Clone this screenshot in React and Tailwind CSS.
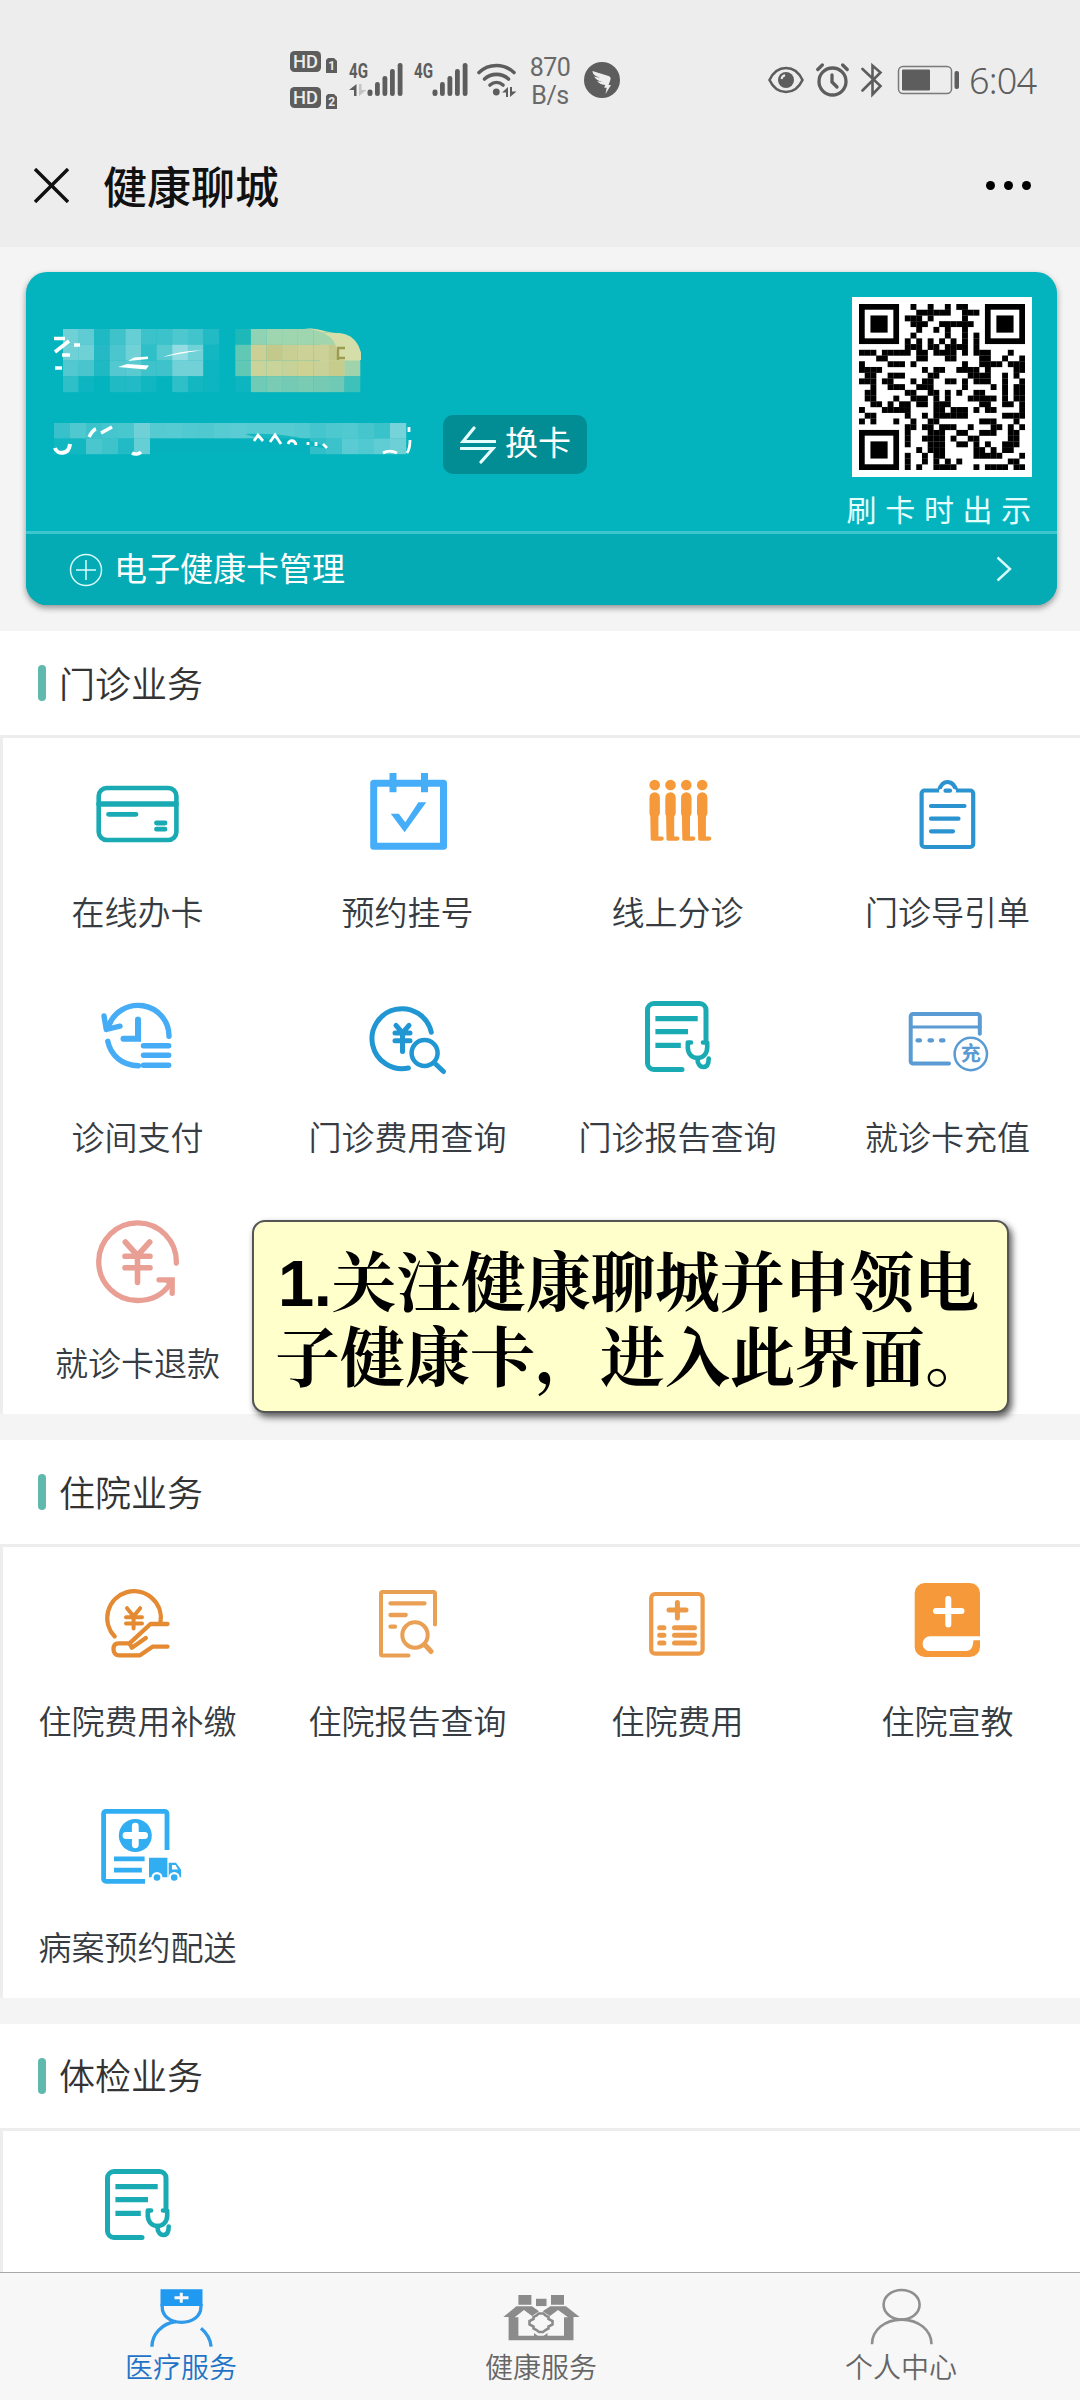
import React from 'react';

const TEAL = '#19aab3';
const ORANGE = '#f5993b';

/* ---------- Status bar ---------- */

const HdBadge = ({ sim }) => (
  <svg width="48" height="22" viewBox="0 0 48 22">
    <rect x="0" y="0" width="31" height="21" rx="4.5" fill="#5d5d5d" />
    <text x="3" y="16.8" fontFamily="Roboto" fontWeight="500" fontSize="18" textLength="25" lengthAdjust="spacingAndGlyphs" fill="#ededed">HD</text>
    <path d="M38 7h6l3 3v12H36V9z" fill="#5d5d5d" />
    <text x="41.6" y="19.4" textAnchor="middle" fontFamily="Roboto" fontWeight="700" fontSize="12" fill="#ededed">{sim}</text>
  </svg>
);

const Signal = ({ data = false }) => (
  <svg className="overflow-visible" width="54" height="34" viewBox="0 0 54 34">
    <text x="0" y="15" fontFamily="Roboto" fontWeight="700" fontSize="21" textLength="19" lengthAdjust="spacingAndGlyphs" fill="#5d5d5d">4G</text>
    {data && (
      <>
        <path d="M7.5 21v12H5v-6H0z" fill="#5d5d5d" />
        <path d="M10 33V21h2.500v6h5z" fill="#c4c4c4" />
      </>
    )}
    <g fill="#5d5d5d">
      <rect x="18.500" y="26.500" width="5" height="6.500" rx="2.300" />
      <rect x="26" y="19" width="4.800" height="14" rx="2.300" />
      <rect x="33.500" y="13" width="4.800" height="20" rx="2.300" />
      <rect x="41" y="6" width="4.800" height="27" rx="2.300" />
      <rect x="48.700" y="0" width="4.800" height="33" rx="2.300" />
    </g>
  </svg>
);

const Wifi = () => (
  <svg width="40" height="34" viewBox="0 0 40 34">
    <g fill="none" stroke="#5d5d5d" strokeWidth="3.6" strokeLinecap="round">
      <path d="M2 9.500C12 .2 27 .2 37 9.500" />
      <path d="M7.500 16C14.500 9.800 24.500 9.800 31.500 16" />
      <path d="M13 22c4-3.400 9-3.400 13 0" />
    </g>
    <circle cx="19.300" cy="29" r="3.400" fill="#5d5d5d" />
    <path d="M31 24v10h-2v-4.500h-4zM33 34V24h2v4.500h4.500z" fill="#5d5d5d" />
  </svg>
);

const StatusBar = () => (
  <div className="flex h-[127px] items-center pt-8 text-[#5d5d5d]">
    <div className="ml-[290px] flex flex-col gap-[14px]">
      <HdBadge sim="1" />
      <HdBadge sim="2" />
    </div>
    <div className="ml-[11px]"><Signal data /></div>
    <div className="ml-[11px]"><Signal /></div>
    <div className="ml-[9px]"><Wifi /></div>
    <div className="ml-[11px] w-[44px] pt-1 text-center font-[Roboto] text-[25px] leading-[28px] tracking-[-0.5px] text-[#696969]">
      <div>870</div>
      <div className="whitespace-nowrap">B/s</div>
    </div>
    <svg className="ml-[12px]" width="36" height="36" viewBox="0 0 36 36">
      <circle cx="18" cy="18" r="18" fill="#5d5d5d" />
      <path d="M8.500 9c5 2 11 3 16 5 2.500 1 2.500 2.500 1.700 4.500L24.500 23H27l-5.500 9 1.200-6.200h-2.500l1-2.800c-4-.5-6.500-1.500-8-4 2 .6 3.500.7 5 .6-4-.8-7-2.200-8-5.400 2 1 4 1.400 6 1.500C11 14 8.700 12.500 8.500 9z" fill="#ededed" />
    </svg>

    <svg className="ml-[148px]" width="36" height="28" viewBox="0 0 36 28">
      <path d="M1.500 14C9-2 27-2 34.500 14 27 30 9 30 1.500 14z" fill="none" stroke="#5d5d5d" strokeWidth="2.600" />
      <circle cx="18" cy="14" r="8" fill="#5d5d5d" />
      <path d="M13.500 13c.3-2 1.600-3.400 3.600-3.800" fill="none" stroke="#ededed" strokeWidth="2" />
    </svg>
    <svg className="ml-[12px]" width="33" height="34" viewBox="0 0 33 34">
      <g fill="none" stroke="#5d5d5d" strokeLinecap="round">
        <circle cx="16.500" cy="18.500" r="13.500" strokeWidth="3.300" />
        <path d="M16 12v7l5 5" strokeWidth="3.300" />
        <path d="M1.800 6.500l4.500-4.500M31.200 6.500L26.700 2" strokeWidth="3.300" />
      </g>
    </svg>
    <svg className="ml-[12px]" width="22" height="36" viewBox="0 0 22 36">
      <path d="M1.500 7l18 17-8 8.500v-29l8 7-18 18" fill="none" stroke="#5d5d5d" strokeWidth="2.600" strokeLinecap="round" />
    </svg>
    <svg className="ml-[14px]" width="63" height="30" viewBox="0 0 63 30">
      <rect x="1.500" y="1.500" width="53" height="27" rx="4.500" fill="none" stroke="#7a7a7a" strokeWidth="1.500" />
      <rect x="5" y="4.500" width="28" height="21" rx="1" fill="#5d5d5d" />
      <rect x="57.500" y="6" width="4.500" height="18" rx="2" fill="#5d5d5d" />
    </svg>
    <span className="ml-[9px] pt-[3px] font-[family-name:'Noto_Sans'] text-[36px] leading-none font-[350] tracking-[-0.8px]">6:04</span>
  </div>
);

const TitleBar = () => (
  <div className="flex h-[120px] items-center pl-[34px] pr-[49px]">
    <svg className="mb-[4px]" width="35" height="35" viewBox="0 0 35 35">
      <path d="M1 1l33 33M34 1L1 34" stroke="#111" strokeWidth="3.400" />
    </svg>
    <h1 className="mb-[5px] ml-[34px] text-[44px] leading-none font-medium text-[#111]">健康聊城</h1>
    <div className="ml-auto flex gap-[9px] pb-[4px]">
      <i className="h-[9px] w-[9px] rounded-full bg-black" />
      <i className="h-[9px] w-[9px] rounded-full bg-black" />
      <i className="h-[9px] w-[9px] rounded-full bg-black" />
    </div>
  </div>
);

/* ---------- Health card ---------- */

// Dark modules per row (finder patterns are drawn separately)
const QR_ROWS = [
  [9, 12, 15, 17, 18],
  [10, 11, 12, 13, 14, 15, 18, 19, 20],
  [8, 9, 10, 12, 18],
  [9, 10, 11, 14, 15, 16, 17, 18, 19],
  [10, 13, 15, 18],
  [9, 15, 18, 20],
  [8, 10, 12, 14, 16, 18, 20],
  [8, 9, 10, 12, 13, 15, 16, 17, 18, 20],
  [0, 1, 2, 4, 5, 6, 7, 8, 10, 11, 13, 14, 15, 16, 18, 20, 21, 22, 26],
  [3, 4, 10, 11, 15, 16, 21, 22, 25, 28],
  [0, 5, 6, 7, 9, 18, 21, 22, 23, 24, 26, 27, 28],
  [0, 1, 2, 3, 11, 13, 14, 17, 18, 19, 20, 22, 27, 28],
  [1, 2, 5, 6, 7, 12, 13, 19, 20, 21, 22, 25, 27],
  [0, 1, 2, 4, 5, 9, 11, 12, 15, 16, 18, 20, 21, 22, 25, 28],
  [2, 5, 6, 7, 10, 11, 12, 18, 23, 25, 27, 28],
  [1, 2, 8, 9, 12, 13, 15, 17, 20, 21, 25, 27, 28],
  [1, 2, 6, 9, 10, 11, 13, 15, 19, 20, 21, 22, 23, 25, 27, 28],
  [2, 3, 5, 7, 8, 10, 11, 13, 14, 15, 21, 22, 25, 26, 28],
  [4, 5, 6, 7, 8, 13, 14, 16, 17, 18, 20, 22, 23, 28, 0],
  [1, 2, 8, 11, 13, 14, 15, 16, 17, 18, 25, 26, 27, 28],
  [0, 2, 6, 9, 12, 13, 21, 22, 23, 27],
  [8, 9, 11, 12, 14, 15, 16, 19, 23, 24, 26, 28],
  [8, 12, 13, 14, 17, 18, 21, 22, 23, 26, 27],
  [8, 11, 12, 13, 14, 16, 19, 20, 26, 27],
  [8, 12, 13, 14, 17, 18, 20, 22, 25, 26, 27],
  [10, 12, 13, 14, 20, 21, 23, 25, 26],
  [8, 11, 13, 14, 20, 21, 22, 23, 24, 28],
  [8, 11, 13, 15, 17, 26, 27],
  [8, 10, 13, 14, 15, 16, 20, 22, 23, 24, 25, 27, 28],
];

const Finder = ({ x, y }) => (
  <g transform={`translate(${x} ${y})`}>
    <rect width="7" height="7" fill="#000" />
    <rect x="1" y="1" width="5" height="5" fill="#fff" />
    <rect x="2" y="2" width="3" height="3" fill="#000" />
  </g>
);

const QrCode = () => (
  <div className="h-[180px] w-[180px] bg-white p-[7px]">
    <svg width="166" height="166" viewBox="0 0 29 29">
      {QR_ROWS.map((cols, y) =>
        cols.map((x) => <rect key={`${x}-${y}`} x={x} y={y} width="1.03" height="1.03" fill="#000" />)
      )}
      <Finder x={0} y={0} />
      <Finder x={22} y={0} />
      <Finder x={0} y={22} />
    </svg>
  </div>
);

// Mosaic over the holder's name, one colour per cell
const NAME_CELLS = [
  ['#6fd0d6', '#5fcbd2', '#1fb9c3', '#3fc2ca', '#66ced5', '#3cc2ca', '#3cc2ca', '#4ec8cf', '#42c4cc', '#22bac4'],
  ['#6fd0d6', '#6fd0d6', '#25b9c5', '#4bc6ce', '#70d1d7', '#2fbfc8', '#5acad1', '#93dde2', '#70d1d7', '#12b7c1'],
  ['#54c8d0', '#4ac5cd', '#1fb9c3', '#54c8d0', '#5acad1', '#3fc2ca', '#3fc2ca', '#72d1d7', '#72d1d7', '#0cb5bf'],
  ['#2fbfc8', '#0cb5bf', '#03b4bf', '#1fbac4', '#22bbc5', '#10b7c1', '#03b4bf', '#2fbfc8', '#12b7c1', '#0cb5bf'],
];

const BADGE_CELLS = [
  ['#1fb8b9', '#8fd2b4', '#9fd6b0', '#9fd6b0', '#9fd6b0', '#a0d5ae', '#a3d6ac'],
  ['#62c8b6', '#cdd095', '#c2c98b', '#c9cf93', '#cbd197', '#cbd197', '#c3ca8b'],
  ['#62c8b6', '#c9d39a', '#c9d39a', '#c7d298', '#cdd294', '#c9d198', '#c5cc8c', '#a0d3ac'],
  ['#0cb5bf', '#6fcab6', '#79cbb3', '#75cab4', '#79cbb3', '#76cab4', '#6fc9b4', '#3ec0bb'],
];

const NUMBER_CELLS = [
  ['#38c1ca', '#50c8d0', '#3cc2cb', '#45c5cd', '#49c7cf', '#6fd1d7', '#55cad1', '#57cbd2', '#50c9d0', '#4fc8d0', '#57cbd2', '#5bccd3', '#57cbd2', '#57cbd2', '#57cbd2', '#50c9d0', '#45c5cd', '#4ec8cf', '#50c9d0', '#47c5cd', '#3ac2ca', '#76d3d9'],
  ['#10b7c1', '#12b7c1', '#4ac6ce', '#3fc3cb', '#22bbc5', '#66ced5', '#05b1bc', '#05b1bc', '#05b1bc', '#05b1bc', '#05b1bc', '#05b1bc', '#05b1bc', '#05b1bc', '#05b1bc', '#05b1bc', '#30bfc8', '#3cc2cb', '#5acbd2', '#50c9d0', '#60cdd4', '#6cd0d6'],
];

const MaskedName = () => (
  <svg className="ml-[26px]" width="330" height="70" viewBox="0 0 330 70">
    {NAME_CELLS.map((row, y) =>
      row.map((c, x) => (
        <rect key={`${x}-${y}`} x={11 + x * 15.6} y={4 + y * 15.75} width="15.8" height="15.9" fill={c} />
      ))
    )}
    <path d="M2 13.500h11M17 16L3 27M10 30h8M22 20l6 0M3 43h7" stroke="#fff" strokeWidth="3.600" fill="none" />
    <path d="M82 32.500l14-1v2.500l-20 2zM66 42l9-3 22 1.500-3 4zM111 32c14-5 26-6 41-7-14 2-26 4-41 7z" fill="#fff" />
    <path d="M268 8h14a26 26 0 0 1 26 26v17h-40z" fill="#d5dda8" />
    {BADGE_CELLS.map((row, y) =>
      row.map((c, x) => (
        <rect key={`${x}-${y}`} x={183.3 + x * 15.6} y={4 + y * 15.75} width="15.8" height="15.9" fill={c} />
      ))
    )}
    <path d="M252 3c22 3 33 10 33 26v6h24v-9C308 15 298 8 287 8h-17L280 3z" fill="#d5dda8" />
    <path d="M252 3h58v29C307 15 298 8 284 8c-10-1-18-5-32-5z" fill="#03b4bf" />
    <path d="M293 23h-7v12M286 33h7" stroke="#9c9b50" strokeWidth="2.400" fill="none" />
  </svg>
);

const MaskedNumber = () => (
  <svg className="ml-[26px]" width="391" height="59" viewBox="0 0 391 59">
    {NUMBER_CELLS.map((row, y) =>
      row.map((c, x) => (
        <rect key={`${x}-${y}`} x={2 + x * 16} y={8 + y * 15.5} width="16.200" height="15.700" fill={c} />
      ))
    )}
    <path d="M3 33c2 7 14 7 15-4" stroke="#fff" strokeWidth="4" fill="none" />
    <path d="M37 22c2-4 4-7 7-8M49 18l11-6M80 38c3 2 7 1 9-1" stroke="#fff" strokeWidth="3.500" fill="none" />
    <path d="M193 19c35-1 64 3 84 15-25-5-55-5-84-15z" fill="#05b1bc" opacity=".8" />
    <path d="M202 26l4-6 5 6M218 27l5-7 6 9M236 29c2-5 7-4 8 1M256 27v3M264 27v4M271 29l4 4M331 38c5-3 10-2 14 0M357 12v5M355 38c3-4 3-8 3-13" stroke="#fff" strokeWidth="2.800" fill="none" />
  </svg>
);

const HealthCard = () => (
  <section className="mt-[25px] ml-[26px] h-[333px] w-[1031px] overflow-hidden rounded-[21px] bg-[#03b4bf] text-white shadow-[0_3px_6px_rgba(0,0,0,0.4)]">
    <div className="flex h-[259px] justify-between">
      <div className="pt-[53px]">
        <MaskedName />
        <div className="mt-[20px] flex items-center">
          <MaskedNumber />
          <button className="flex h-[59px] w-[144px] items-center rounded-[10px] bg-[#028d95] pl-[17px]">
            <svg width="36" height="38" viewBox="0 0 36 38">
              <path d="M14 2L3 15.500h32M1 22.500h32L21 36" fill="none" stroke="#e5fdfd" strokeWidth="3.200" strokeLinecap="round" />
            </svg>
            <span className="mb-[6px] ml-[9px] text-[33px] leading-none">换卡</span>
          </button>
        </div>
      </div>
      <div className="mr-[16px] flex flex-col items-end pt-[25px]">
        <div className="mr-[9px]"><QrCode /></div>
        <p className="mt-[15px] mr-[1px] text-[30px] leading-[32px] tracking-[8.7px] text-[#e5ffff]">刷卡时出示</p>
      </div>
    </div>
    <div className="flex h-[74px] items-center border-t-[3px] border-[#3ec6ce] bg-[#04abb5] pl-[43px] pr-[45px]">
      <svg width="34" height="34" viewBox="0 0 34 34">
        <circle cx="17" cy="17" r="15.500" fill="none" stroke="#d9fbfb" strokeWidth="1.500" />
        <path d="M7 17h20M17 7v20" stroke="#d9fbfb" strokeWidth="1.500" />
      </svg>
      <span className="mb-[4px] ml-[11px] text-[33px] leading-none">电子健康卡管理</span>
      <svg className="mb-[2px] ml-auto" width="16" height="26" viewBox="0 0 16 26">
        <path d="M1.500 1.500L14 13 1.500 24.500" fill="none" stroke="#d9fbfb" strokeWidth="2.400" />
      </svg>
    </div>
  </section>
);

/* ---------- Service icons (110 x 110 artboard) ---------- */

const Icon = ({ children, color, width = 5 }) => (
  <svg width="110" height="110" viewBox="0 0 110 110" fill="none" stroke={color} strokeWidth={width} strokeLinecap="round" strokeLinejoin="round">
    {children}
  </svg>
);

const CardIcon = () => (
  <Icon color={TEAL} width={4.6}>
    <rect x="15.700" y="30" width="77.700" height="52" rx="8" />
    <path d="M16 46h77" strokeWidth="5.500" />
    <path d="M25.500 56.300H53M73.500 65H82M73.500 71.200H82" strokeWidth="4.800" />
  </Icon>
);

const CalendarIcon = () => (
  <Icon color="#46adf9" width={7}>
    <rect x="20.700" y="25.200" width="69.800" height="63" />
    <path d="M40 15v19.300M71.500 15v19.300" strokeLinecap="butt" />
    <path d="M37.800 55.700h8l6.500 8.600 13.100-20h7.900L51.600 74.300z" fill="#46adf9" stroke="none" />
  </Icon>
);

const PeopleIcon = () => (
  <Icon color={ORANGE}>
    {[31.7, 47.5, 63.3, 79.2].map((x) => (
      <g key={x} transform={`translate(${x} 0)`} fill={ORANGE} stroke="none">
        <circle cx="0" cy="27" r="5.300" />
        <path d="M-5.200 39.500a5.200 5.200 0 0 1 10.400 0V55c0 1.500-1.200 2.500-1.500 4v19.500H7a1.800 1.800 0 0 1 0 4.200h-9c-1.500 0-2-.7-2-2L-4.400 58c-.6-1-.8-2-.8-3z" />
      </g>
    ))}
  </Icon>
);

const ClipboardIcon = () => (
  <Icon color="#2b93d0" width={4.2}>
    <path d="M46 32.500H31.600a3 3 0 0 0-3 3V86a3 3 0 0 0 3 3h45.600a3 3 0 0 0 3-3V35.500a3 3 0 0 0-3-3H63.500c-2-5-4-8.500-9-8.500s-7 3.500-8.500 8.500z" />
    <path d="M48 33h13" stroke="#fff" />
    <path d="M52.500 32.700h4.500M38 48h33.500M38 60.700h27.500M38 73.300h22" />
  </Icon>
);

const ClockPayIcon = () => (
  <Icon color="#45acf5" width={5.4}>
    <path d="M25.500 43.500A31 30.500 0 0 1 86 53.300" />
    <path d="M21 33l2.300 13.500 13.700-3.300" />
    <path d="M24.800 58.300C27.500 72 39 82.500 55.400 82.700" />
    <path d="M55 36.500v19.200H40.500" strokeWidth="6" strokeLinejoin="miter" />
    <path d="M60.500 62.700h25.200M60.500 72.300h25.200M60.500 82.300h25.200" />
  </Icon>
);

const YenSearchIcon = () => (
  <Icon color="#2096d2">
    <path d="M78.300 49.300A30 30 0 1 0 55.400 85" />
    <path d="M43 42.300l6.500 7.500 6.500-7.500M42 50h15M42 57.700h15M49.500 50v18.500" />
    <circle cx="71.600" cy="70" r="13" strokeWidth="4.500" />
    <path d="M81.500 80l9 8.500" />
  </Icon>
);

const ReportIcon = () => (
  <Icon color={TEAL}>
    <path d="M59 86.500H31a6.500 6.500 0 0 1-6.500-6.500V27a6.500 6.500 0 0 1 6.500-6.500h45.500A6.500 6.500 0 0 1 83 27v29" />
    <path d="M32.400 35.700h42.300M32.400 48.700H65M32.400 62.400h25.400" strokeLinecap="butt" strokeWidth="5.200" />
    <path d="M68 59.500h-3.200v5c0 6 4 10.500 9.700 10.500s9.700-4.500 9.700-10.500v-5H80" strokeWidth="4.600" />
    <path d="M74.400 75c0 6 2.600 9 6 9s5.300-3 5.300-8.500" strokeWidth="4.600" />
  </Icon>
);

const RechargeIcon = () => (
  <Icon color="#599bd2" width={4}>
    <path d="M56 80.500H20a2.300 2.300 0 0 1-2.300-2.300V33.300A2.300 2.300 0 0 1 20 31h64.500a2.300 2.300 0 0 1 2.300 2.300v17.500" />
    <path d="M18 44h69" strokeWidth="3" />
    <path d="M24.500 57.400H27M36.500 57.400H39M48 57.400h2.500" strokeWidth="4.200" />
    <circle cx="77.800" cy="71" r="16.200" strokeWidth="2.500" />
    <text x="77.800" y="78" textAnchor="middle" fontFamily="'Noto Sans CJK SC', sans-serif" fontWeight="700" fontSize="20" fill="#599bd2" stroke="none">充</text>
  </Icon>
);

const RefundIcon = () => (
  <Icon color="#e99f94" width={5.3}>
    <path d="M93.300 54A38.800 38.800 0 1 0 54.700 91.500c14 0 25-6 32-16" />
    <path d="M76 70.800h13.200v13.500" strokeLinejoin="miter" />
    <path d="M80 71h9v9z" fill="#e99f94" stroke="none" />
    <path d="M42.300 33l12.200 13.500L66.700 33M42 47.200h25M42 58.700h25M54.500 47v26.500" strokeWidth="5.600" />
  </Icon>
);

const HandYenIcon = () => (
  <Icon color="#e48a32" width={4.3}>
    <path d="M31.700 69.500A26.800 26.800 0 1 1 77.500 55.500" />
    <path d="M44 41.200l6.600 8 6.600-8M43 50.200h16M43 56.500h16M50.600 50v11.500" strokeWidth="4" />
    <path d="M84.500 57H67.500L46.500 76.300H35.500c-3.500 0-5 2.200-5 5.800s1.800 6.200 5 6.200h21.500l12.500-8.600h15" />
    <path d="M46.500 76.300l2.400 4.400 13.900-9.800" />
  </Icon>
);

const ReportSearchIcon = () => (
  <Icon color="#e9a055" width={4}>
    <path d="M55.500 88.500H29.500A1.500 1.500 0 0 1 28 87V26.500a1.500 1.500 0 0 1 1.500-1.500h51a1.500 1.500 0 0 1 1.500 1.500v31" />
    <path d="M37.500 36.300h34M37.500 48h15.200M37.500 59.700h4.500" strokeWidth="4.300" />
    <circle cx="62" cy="68" r="12.700" />
    <path d="M71.600 77.500l6.500 7" strokeWidth="5" />
  </Icon>
);

const BillIcon = () => (
  <Icon color="#ec9a48" width={4.2}>
    <rect x="28.200" y="27" width="51.400" height="59.700" rx="4" />
    <path d="M46 43h17M54.400 35.500v15.500" strokeWidth="5" />
    <path d="M36.700 60.700h4.200M36.700 68.300h4.200M36.700 76h4.200M51.500 60.700h20M51.500 68.300h20M51.500 76h20" strokeWidth="5" />
  </Icon>
);

const BookIcon = () => (
  <Icon color={ORANGE}>
    <rect x="21.700" y="16" width="65.300" height="74" rx="10" fill={ORANGE} stroke="none" />
    <path d="M43 44h25.500M55.300 32v25.500" stroke="#fff" strokeWidth="6" />
    <path d="M88 69.300H37a7.400 7.400 0 0 0 0 14.800h36c5 0 7-4 7.500-10.800H88z" fill="#fff" stroke="none" />
  </Icon>
);

const DeliveryIcon = () => (
  <Icon color="#31adf2" width={4.8}>
    <path d="M62 88.300H23a2.400 2.400 0 0 1-2.400-2.400V20.700a2.400 2.400 0 0 1 2.400-2.400h58.600a2.400 2.400 0 0 1 2.400 2.400V57" strokeLinecap="butt" />
    <circle cx="52.300" cy="42.500" r="16.500" fill="#31adf2" stroke="none" />
    <path d="M43 42.500h18.600M52.300 33.200v18.600" stroke="#fff" strokeWidth="6.800" />
    <path d="M31 65.800h30.600M31 77.200h27.900" strokeLinecap="butt" />
    <g fill="#31adf2" stroke="none">
      <path d="M66 64.800h18.400v19.400H66zM85.700 69.800H93l5 7v7.400H85.700z" />
      <path d="M89 72h3.500l2.500 4.500h-6z" fill="#fff" />
      <circle cx="74" cy="84.500" r="5.500" fill="#fff" />
      <circle cx="91.200" cy="84.500" r="5.500" fill="#fff" />
      <circle cx="74" cy="84.500" r="3.300" />
      <circle cx="91.200" cy="84.500" r="3.300" />
    </g>
  </Icon>
);

/* ---------- Sections ---------- */

const SECTIONS = [
  {
    title: '门诊业务',
    items: [
      { label: '在线办卡', icon: CardIcon },
      { label: '预约挂号', icon: CalendarIcon },
      { label: '线上分诊', icon: PeopleIcon },
      { label: '门诊导引单', icon: ClipboardIcon },
      { label: '诊间支付', icon: ClockPayIcon },
      { label: '门诊费用查询', icon: YenSearchIcon },
      { label: '门诊报告查询', icon: ReportIcon },
      { label: '就诊卡充值', icon: RechargeIcon },
      { label: '就诊卡退款', icon: RefundIcon },
    ],
  },
  {
    title: '住院业务',
    items: [
      { label: '住院费用补缴', icon: HandYenIcon },
      { label: '住院报告查询', icon: ReportSearchIcon },
      { label: '住院费用', icon: BillIcon },
      { label: '住院宣教', icon: BookIcon },
      { label: '病案预约配送', icon: DeliveryIcon },
    ],
  },
  {
    title: '体检业务',
    items: [{ label: '', icon: ReportIcon }],
  },
];

const Section = ({ title, items, children }) => (
  <section className="relative mb-[26px] bg-white">
    <div className="flex h-[104px] items-center pl-[38px]">
      <span className="h-9 w-2 rounded-full bg-[#5fb9ad]" />
      <h2 className="mb-[3px] ml-[13px] text-[36px] leading-none font-[350] text-[#333]">{title}</h2>
    </div>
    <div className="grid auto-rows-[225.4px] grid-cols-[repeat(4,270px)] overflow-hidden border-t-[3px] border-l-[3px] border-[#ededed]">
      {items.map(({ label, icon: ItemIcon }, index) => (
        <div key={index} className="flex flex-col items-center pt-5">
          <ItemIcon />
          <span className="mt-[23px] mr-[1px] text-[33px] leading-[40px] font-[350] whitespace-nowrap text-[#363c42]">{label}</span>
        </div>
      ))}
    </div>
    {children}
  </section>
);

const Callout = () => (
  <div className="absolute top-[589px] left-[252px] h-[193px] w-[757px] rounded-[13px] border-2 border-[#555] bg-[#ffffcb] pt-[19px] pl-[21px] font-[family-name:'Noto_Serif_CJK_SC','Noto_Sans_CJK_SC',serif] text-[65px] leading-[75px] font-bold whitespace-nowrap text-black shadow-[3px_4px_7px_rgba(0,0,0,0.65)]">
    <p className="h-[75px] pl-[3px] tracking-[-0.3px]">
      <span className="font-[family-name:'Liberation_Sans'] leading-none">1.</span>
      关注健康聊城并申领电
    </p>
    <p className="h-[75px]">子健康卡，进入此界面。</p>
  </div>
);

/* ---------- Bottom navigation ---------- */

const NurseIcon = () => (
  <svg width="80" height="64" viewBox="0 0 80 64" fill="none" stroke="#2f9aea" strokeWidth="3.300">
    <path d="M22.200 18v3c0 9 8 15.300 19.300 15.300S60.900 30 60.900 21v-3" />
    <path d="M20.500 3.300h42V20h-42z" fill="#1f9af0" stroke="none" />
    <path d="M34.500 11.700h14M41.300 6.700v10" stroke="#f7f7f7" strokeWidth="3" />
    <path d="M36 35.500C22 37.500 12 48 11.900 60.700M61 42.300c6 5 9.500 11 10.100 18.400" />
  </svg>
);

const FamilyIcon = () => (
  <svg width="80" height="64" viewBox="0 0 80 64" fill="#8b8b8b">
    <path d="M18.400 9h13v9.700h-13zM36 12.700h10.500v7.600H36zM51 9h13v9.700H51z" />
    <path d="M3.300 31l13-10.700h16l8.500 6 9.400-6H66L79.600 31h-6.100v23.300H8.600V31z" />
    <path d="M14.700 31.300L24 24l8 6 8.800-6 9.200 6 8-6 10 7.300h-4v18.400H18.400V31.300z" fill="#f7f7f7" />
    <path d="M32 20.300l8.800 6 9-6z" fill="#f7f7f7" />
    <path d="M36.500 29.500l2-2h5l2 2 3 1.500v2l4 2v3.500l-4 2v2l-3 1.500-2.500 2h-4l-2.500-2-3-1.500v-2l-4-2V35l4-2v-2z" fill="#f7f7f7" stroke="#8b8b8b" strokeWidth="2.600" />
    <path d="M34 47l4 3h-4zM47.500 47l-4 3h4z" />
  </svg>
);

const UserIcon = () => (
  <svg width="80" height="64" viewBox="0 0 80 64" fill="none" stroke="#8f8f8f" strokeWidth="2.600">
    <ellipse cx="41.600" cy="18.800" rx="18" ry="14.800" />
    <path d="M12 58.300C12 44 25 33.600 41.600 33.600S71.500 44 71.500 58.300" />
  </svg>
);

const TABS = [
  { label: '医疗服务', icon: NurseIcon, active: true },
  { label: '健康服务', icon: FamilyIcon },
  { label: '个人中心', icon: UserIcon },
];

const BottomNav = () => (
  <nav className="absolute inset-x-0 bottom-0 grid h-[128px] grid-cols-3 border-t border-[#a8a8a8] bg-[#f7f7f7]">
    {TABS.map(({ label, icon: TabIcon, active }) => (
      <a key={label} className="flex flex-col items-center pt-[13px]">
        <TabIcon />
        <span className={`ml-[2px] text-[28px] leading-[32px] font-[350] ${active ? 'text-[#1f74c6]' : 'text-[#666]'}`}>{label}</span>
      </a>
    ))}
  </nav>
);

export default function App() {
  return (
    <div className="relative h-[2400px] w-[1080px] overflow-hidden bg-[#f4f4f4] font-['Noto_Sans_CJK_SC',sans-serif]">
      <header className="bg-[#ededed]">
        <StatusBar />
        <TitleBar />
      </header>
      <HealthCard />
      <main className="mt-[26px]">
        {SECTIONS.map((section, index) => (
          <Section key={section.title} title={section.title} items={section.items}>
            {index === 0 && <Callout />}
          </Section>
        ))}
      </main>
      <BottomNav />
    </div>
  );
}
